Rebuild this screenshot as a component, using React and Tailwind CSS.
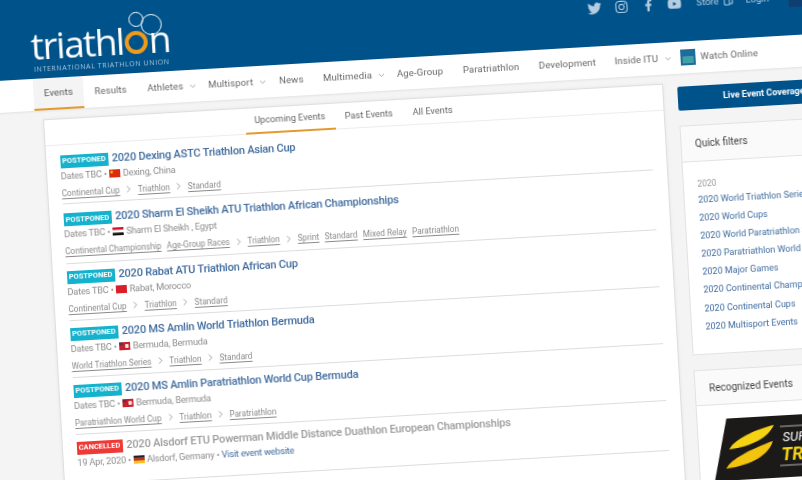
import { ChevronDown, ChevronRight } from 'lucide-react';
import { FaTwitter, FaInstagram, FaFacebookF, FaYoutube } from 'react-icons/fa';

const navItems = [
  { label: 'Events', width: 'w-[50px]', active: true },
  { label: 'Results', width: 'w-[53px]', pad: 'ml-[11px]' },
  { label: 'Athletes', width: 'w-[61px]', chevron: true },
  { label: 'Multisport', width: 'w-[71px]', chevron: true },
  { label: 'News', width: 'w-[44px]' },
  { label: 'Multimedia', width: 'w-[74px]', chevron: true },
  { label: 'Age-Group', width: 'w-[66px]' },
  { label: 'Paratriathlon', width: 'w-[76px]' },
  { label: 'Development', width: 'w-[76px]' },
  { label: 'Inside ITU', width: 'w-[66px]', chevron: true },
];

const events = [
  {
    height: 'h-[58.5px]', pad: 'pt-[9px]', status: 'POSTPONED', title: '2020 Dexing ASTC Triathlon Asian Cup',
    date: 'Dates TBC', flag: 'cn', place: 'Dexing, China',
    tags: [['Continental Cup'], ['Triathlon'], ['Standard']],
  },
  {
    height: 'h-[60px]', pad: 'pt-[9px]', status: 'POSTPONED', title: '2020 Sharm El Sheikh ATU Triathlon African Championships',
    date: 'Dates TBC', flag: 'eg', place: 'Sharm El Sheikh , Egypt',
    tags: [['Continental Championship', 'Age-Group Races'], ['Triathlon'], ['Sprint', 'Standard', 'Mixed Relay', 'Paratriathlon']],
  },
  {
    height: 'h-[57px]', pad: 'pt-[6.5px]', status: 'POSTPONED', title: '2020 Rabat ATU Triathlon African Cup',
    date: 'Dates TBC', flag: 'ma', place: 'Rabat, Morocco',
    tags: [['Continental Cup'], ['Triathlon'], ['Standard']],
  },
  {
    height: 'h-[57px]', pad: 'pt-[6.5px]', status: 'POSTPONED', title: '2020 MS Amlin World Triathlon Bermuda',
    date: 'Dates TBC', flag: 'bm', place: 'Bermuda, Bermuda',
    tags: [['World Triathlon Series'], ['Triathlon'], ['Standard']],
  },
  {
    height: 'h-[57px]', pad: 'pt-[6.5px]', status: 'POSTPONED', title: '2020 MS Amlin Paratriathlon World Cup Bermuda',
    date: 'Dates TBC', flag: 'bm', place: 'Bermuda, Bermuda',
    tags: [['Paratriathlon World Cup'], ['Triathlon'], ['Paratriathlon']],
  },
  {
    height: 'h-[50px]', pad: 'pt-[6.5px]', status: 'CANCELLED', title: '2020 Alsdorf ETU Powerman Middle Distance Duathlon European Championships',
    date: '19 Apr, 2020', flag: 'de', place: 'Alsdorf, Germany', website: true, tags: [],
  },
];

const filters = [
  '2020 World Triathlon Series',
  '2020 World Cups',
  '2020 World Paratriathlon Series',
  '2020 Paratriathlon World Cups',
  '2020 Major Games',
  '2020 Continental Championships',
  '2020 Continental Cups',
  '2020 Multisport Events',
];

function Flag({ code }) {
  return (
    <svg width="11" height="8" viewBox="0 0 11 8" className="shrink-0">
      {code === 'cn' && (
        <>
          <rect width="11" height="8" fill="#de2910" />
          <circle cx="2.5" cy="2.5" r="1.2" fill="#ffde00" />
        </>
      )}
      {code === 'eg' && (
        <>
          <rect width="11" height="2.7" fill="#ce1126" />
          <rect y="2.7" width="11" height="2.7" fill="#fff" />
          <rect y="5.3" width="11" height="2.7" fill="#111" />
        </>
      )}
      {code === 'ma' && <rect width="11" height="8" fill="#d9202a" />}
      {code === 'bm' && (
        <>
          <rect width="11" height="8" fill="#c8202c" />
          <rect x="6" y="2" width="3.5" height="4" rx="1" fill="#f2e6e0" />
          <rect width="4" height="3" fill="#7b2440" />
        </>
      )}
      {code === 'de' && (
        <>
          <rect width="11" height="2.7" fill="#222" />
          <rect y="2.7" width="11" height="2.7" fill="#d8261c" />
          <rect y="5.3" width="11" height="2.7" fill="#f5c518" />
        </>
      )}
    </svg>
  );
}

function Tags({ groups }) {
  return (
    <div className="flex items-center mt-[3.5px] h-[14px] text-[8.2px] text-[#8a8a8a]">
      {groups.map((group, i) => (
        <div key={i} className="flex items-center">
          {i > 0 && <ChevronRight size={11} strokeWidth={1.5} className="mx-[3.5px] text-[#777]" />}
          <div className="flex gap-[5.5px]">
            {group.map((tag) => (
              <span key={tag} className="underline underline-offset-2 whitespace-nowrap">{tag}</span>
            ))}
          </div>
        </div>
      ))}
    </div>
  );
}

function EventRow({ event }) {
  const cancelled = event.status === 'CANCELLED';
  return (
    <div className={`${event.height} ${event.pad} border-b border-[#dcdcdc] box-border`}>
      <div className="flex items-center h-[14px]">
        <span className={`h-[13px] shrink-0 flex items-center justify-center text-[7.5px] font-bold text-white ${cancelled ? 'w-[46px] bg-[#ee3a36]' : 'w-[48px] bg-[#14b2cc]'}`}>
          {event.status}
        </span>
        <span className={`ml-[4px] text-[11px] tracking-[-0.2px] font-medium whitespace-nowrap ${cancelled ? 'text-[#9a9a9a]' : 'text-[#3f6b9e]'}`}>
          {event.title}
        </span>
      </div>
      <div className="flex items-center gap-[2.5px] h-[14px] mt-[0.5px] text-[9.2px] tracking-[-0.2px] text-[#8c8c8c]">
        <span>{event.date} •</span>
        <Flag code={event.flag} />
        <span>{event.place}</span>
        {event.website && <span>• <span className="text-[#3f6b9e]">Visit event website</span></span>}
      </div>
      {event.tags.length > 0 && <Tags groups={event.tags} />}
    </div>
  );
}

function Logo() {
  return (
    <div className="relative w-[150px] h-[83px] ml-[68px] shrink-0">
      <div className="flex items-baseline pt-[31px] text-white text-[37px] leading-[38px] font-medium font-['Open_Sans',sans-serif]">
        <span className="tracking-[-1.5px]">triathl</span>
        <span className="w-[23px] h-[23px] mx-[1px] rounded-full border-[4px] border-[#ee9a1c] shrink-0" />
        <span>n</span>
      </div>
      <span className="absolute left-[2px] top-[69px] text-[7px] leading-[9px] tracking-[0.6px] text-[#a9c6dd] whitespace-nowrap font-['Open_Sans',sans-serif]">
        INTERNATIONAL TRIATHLON UNION
      </span>
      <span className="absolute left-[99px] top-[22px] w-[15px] h-[15px] rounded-full border border-white" />
      <span className="absolute left-[111px] top-[25px] w-[21px] h-[21px] rounded-full border border-white" />
    </div>
  );
}

export default function App() {
  return (
    <div className="w-[802px] h-[480px] overflow-hidden bg-[#f4f4f4] font-['Roboto',sans-serif]">
      <div className="w-[960px] h-[620px] -ml-[40px] origin-top-left rotate-[-3.3deg] blur-[0.35px] bg-[#f4f4f4]">
        {/* header */}
        <div className="h-[83px] bg-[#00528a] flex">
          <Logo />
          <div className="flex items-start pt-[37px] text-[#b4cde0] ml-[408px]">
            <FaTwitter size={14} className="mt-[1px]" />
            <FaInstagram size={14} className="mt-[1px] ml-[13px]" />
            <FaFacebookF size={12} className="mt-[2px] ml-[14px]" />
            <FaYoutube size={14} className="mt-[1px] ml-[13px]" />
            <span className="ml-[15px] text-[9.5px] leading-[16px]">Store</span>
            <svg width="10" height="10" viewBox="0 0 10 10" className="ml-[5px] mt-[3px]" fill="none" stroke="currentColor">
              <path d="M1 2h5v7H1zM6 3h3v5H6" />
            </svg>
            <span className="ml-[12px] text-[9.5px] leading-[16px]">Login</span>
            <span className="ml-[19px] w-[70px] h-[18px] bg-[#0e3f70] rounded-[2px]" />
          </div>
        </div>
        {/* nav */}
        <div className="h-[32px] bg-white flex items-stretch pl-[68px] text-[9.5px] text-[#666] tracking-[0.15px] shadow-[0_1px_2px_rgba(0,0,0,0.08)]">
          {navItems.map((item) => (
            <div
              key={item.label}
              className={`flex items-center shrink-0 ${item.active ? 'justify-center bg-[#f4f4f4] border-b-2 border-[#e39a2d] text-[#555]' : ''} ${item.width} ${item.pad || ''}`}
            >
              <span className="whitespace-nowrap">{item.label}</span>
              {item.chevron && <ChevronDown size={9} strokeWidth={2} className="ml-[5px] text-[#888]" />}
            </div>
          ))}
          <div className="flex items-center shrink-0">
            <div className="w-[15px] h-[16px] bg-[#1d6c9c] flex items-end justify-center">
              <span className="w-[11px] h-[7px] bg-[#3fa0a8] mb-[2px]" />
            </div>
            <span className="ml-[5px] whitespace-nowrap">Watch Online</span>
          </div>
        </div>
        {/* main */}
        <div className="flex items-start pl-[75.5px] pt-[9px]">
          <div className="w-[621px] h-[500px] shrink-0 bg-white border border-[#dedede] shadow-[0_0_4px_rgba(0,0,0,0.06)]">
            <div className="h-[26px] flex border-b border-[#ececec] text-[9.2px] text-[#666] pl-[201px]">
              <div className="w-[90px] h-[26px] flex items-center justify-center border-b-2 border-[#e39a2d] shrink-0">
                Upcoming Events
              </div>
              <div className="ml-[10px] flex items-center h-[25px]">Past Events</div>
              <div className="ml-[20px] flex items-center h-[25px]">All Events</div>
            </div>
            <div className="mx-[14px]">
              {events.map((event) => (
                <EventRow key={event.title} event={event} />
              ))}
            </div>
          </div>
          <div className="ml-[14px] w-[173px] shrink-0 pt-[4px]">
            <div className="h-[24px] bg-[#00528a] rounded-[2px] flex items-center justify-center text-white text-[9px] font-bold">
              Live Event Coverage
            </div>
            <div className="mt-[15px] h-[230px] bg-white border border-[#e2e2e2]">
              <div className="h-[36px] bg-[#fafafa] border-b border-[#e2e2e2] flex items-center pl-[14px] text-[10px] text-[#444]">
                Quick filters
              </div>
              <div className="pl-[14px] pt-[15px] text-[9px]">
                <div className="h-[14px] text-[8.5px] leading-[14px] text-[#999]">2020</div>
                {filters.map((f) => (
                  <div key={f} className="h-[18.1px] leading-[18.1px] text-[#3f6b9e] whitespace-nowrap">{f}</div>
                ))}
              </div>
            </div>
            <div className="mt-[15px] h-[200px] bg-white border border-[#e2e2e2]">
              <div className="h-[35px] bg-[#fafafa] border-b border-[#e2e2e2] flex items-center pl-[14px] text-[10px] text-[#444]">
                Recognized Events
              </div>
              <svg width="150" height="62" viewBox="0 0 150 62" className="ml-[14px] mt-[14px]">
                <path d="M15 0H150V62H0Z" fill="#1c1a18" />
                <path d="M16 31C22 21 42 13 62 9C56 21 40 29 16 31Z" fill="#f5d312" />
                <path d="M12 50C18 40 38 32 60 25C56 38 38 48 12 50Z" fill="#f2c40f" />
                <path d="M68 11H150M66 50H150" stroke="#ddd" strokeWidth="0.8" />
                <text x="70" y="26" fill="#fff" fontSize="13" fontStyle="italic" fontFamily="Roboto, sans-serif">SUPER</text>
                <text x="68" y="45" fill="#f5d312" fontSize="18" fontStyle="italic" fontWeight="700" fontFamily="Roboto, sans-serif">TRIATHLON</text>
              </svg>
            </div>
          </div>
        </div>
      </div>
    </div>
  );
}
